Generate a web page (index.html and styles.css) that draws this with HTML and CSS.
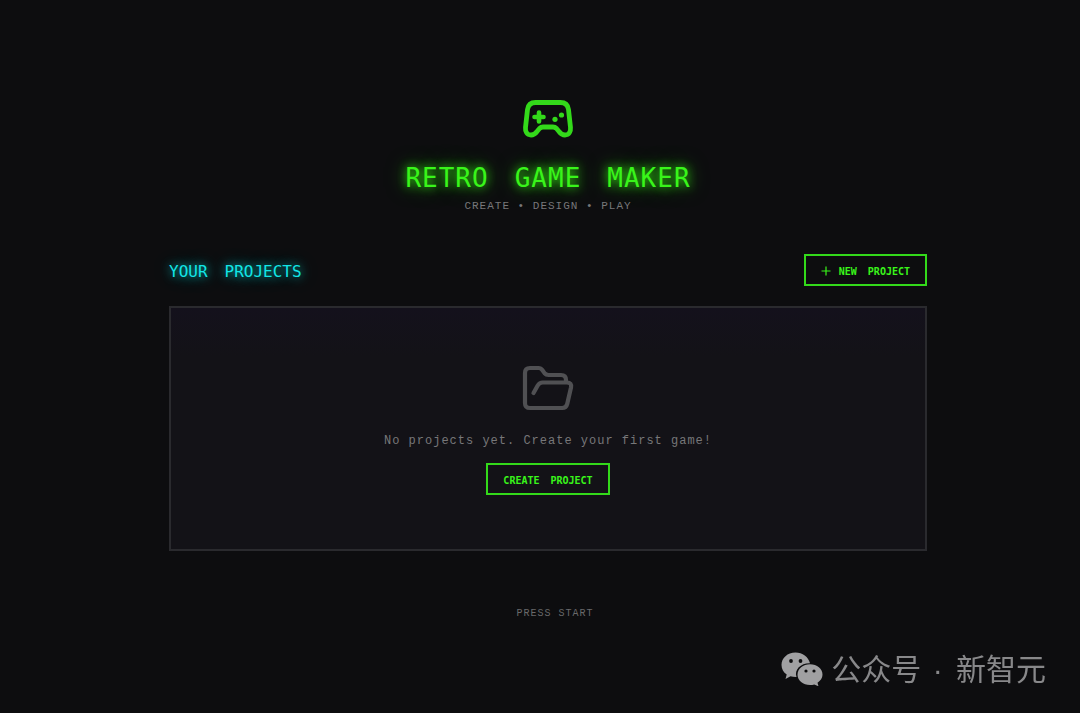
FILE: index.html
```
<!DOCTYPE html>
<html lang="en">
<head>
    <meta charset="UTF-8">
    <meta name="viewport" content="width=device-width, initial-scale=1.0">
    <title>Retro Game Maker</title>
    <link rel="stylesheet" href="styles.css">
</head>
<body>

<div class="container">
    <header class="hero">
        <svg class="hero-icon" viewBox="0 0 52 40" aria-hidden="true">
            <path d="M13.500 3.500h25q7 0 8 7l2 18c.4 4-1.500 7.500-5.500 7.500-3 0-4.500-1.500-6-3.500l-2.500-3q-1.500-1.500-3.500-1.500H21q-2 0-3.500 1.500L15 32.500c-1.500 2-3 3.500-6 3.500-4 0-5.900-3.500-5.500-7.500l2-18q1-7 8-7z" fill="none" stroke="currentColor" stroke-width="4.800" stroke-linejoin="round"/>
            <path d="M17 13.500v9M12.500 18h9" stroke="currentColor" stroke-width="4.600" stroke-linecap="round"/>
            <circle cx="33" cy="20.300" r="2.600" fill="currentColor"/>
            <circle cx="39.500" cy="16" r="2.600" fill="currentColor"/>
        </svg>
        <h1 class="words"><span>RETRO</span> <span>GAME</span> <span>MAKER</span></h1>
        <p class="tagline">CREATE • DESIGN • PLAY</p>
    </header>

    <main>
        <div class="section-header">
            <h2 class="words"><span>YOUR</span> <span>PROJECTS</span></h2>
            <button type="button" class="btn">
                <svg class="plus" viewBox="0 0 10 10" aria-hidden="true">
                    <path d="M5 .5v9M.5 5h9" stroke="currentColor" stroke-width="1.200"/>
                </svg>
                <span class="words"><span>NEW</span> <span>PROJECT</span></span>
            </button>
        </div>

        <section class="empty">
            <svg class="folder" viewBox="0 0 52 46" aria-hidden="true">
                <path d="M11.500 28l4.200-7.500q1.800-3 5-3H45q5 0 4 5l-3.800 16.500q-1 4-5 4H8q-5 0-5-5V8q0-5 5-5h8.500q2.500 0 3.800 2l2.400 3.400Q24 10 26.500 10H39q5 0 5 5v2.500" fill="none" stroke="currentColor" stroke-width="4.200" stroke-linecap="round" stroke-linejoin="round"/>
            </svg>
            <p>No projects yet. Create your first game!</p>
            <button type="button" class="btn"><span class="words"><span>CREATE</span> <span>PROJECT</span></span></button>
        </section>
    </main>

    <footer>PRESS START</footer>
</div>

<div class="watermark" lang="zh-CN">
    <svg viewBox="0 0 42 34" aria-hidden="true">
        <path d="M14.500.5C6.500.5.5 6 .5 13c0 4 2 7.300 5.200 9.600L4.500 27l5-2.700c2 .6 3.700.9 6 .8C13 17.500 20 11 29 11.300 27.500 5 21.500.5 14.500.5z" fill="currentColor"/>
        <path d="M29 12.300c-7 0-12.500 4.700-12.500 10.400S22 33 29 33c1.500 0 3-.2 4.300-.6l4.200 1.900-1-3.600c3-2 5-4.800 5-8 0-5.700-5.500-10.400-12.500-10.400z" fill="currentColor"/>
        <g fill="#0d0d0f">
            <circle cx="10" cy="9" r="1.900"/>
            <circle cx="19.500" cy="9" r="1.900"/>
            <circle cx="25" cy="19" r="1.600"/>
            <circle cx="33" cy="19" r="1.600"/>
        </g>
    </svg>
    <span>公众号<span class="dot"> · </span>新智元</span>
</div>

</body>
</html>
```

FILE: styles.css
```
* {
    box-sizing: border-box;
}

body {
    margin: 0;
    padding: 99px 0 0 16px;
    min-height: 100vh;
    background-color: #0d0d0f;
    color: #777779;
    font-family: "Courier New", "Liberation Mono", monospace;
}

h1, h2, p {
    margin: 0;
}

.container {
    max-width: 758px;
    margin: 0 auto;
}

.hero {
    display: flex;
    flex-direction: column;
    align-items: center;
}

.hero-icon {
    width: 52px;
    height: 40px;
    color: #33d91a;
}

.words {
    display: inline-flex;
    font-family: "DejaVu Sans Mono", monospace;
}

h1 {
    margin-top: 23px;
    gap: 26px;
    font-size: 26px;
    line-height: 32px;
    font-weight: normal;
    letter-spacing: 1px;
    color: #39f51a;
    text-shadow: 0 0 10px rgba(57, 255, 20, 0.9), 0 0 20px rgba(57, 255, 20, 0.6);
}

.tagline {
    margin-top: 4px;
    font-size: 11px;
    line-height: 16px;
    letter-spacing: 1px;
}

.section-header {
    display: flex;
    justify-content: space-between;
    align-items: center;
    margin: 40px 0 20px;
}

h2 {
    gap: 17px;
    padding-top: 4px;
    font-size: 16px;
    line-height: 24px;
    font-weight: normal;
    color: #12e6e6;
    text-shadow: 0 0 10px rgba(0, 255, 255, 0.7), 0 0 20px rgba(0, 255, 255, 0.4);
}

.btn {
    display: inline-flex;
    align-items: center;
    gap: 8px;
    height: 32px;
    padding: 2px 15px 0;
    border: 2px solid #33d91a;
    background: transparent;
    color: #39f51a;
    font-size: 10px;
    font-weight: bold;
    cursor: pointer;
}

.btn:hover {
    background-color: rgba(57, 255, 20, 0.1);
}

.btn .words {
    gap: 11px;
}

.plus {
    width: 10px;
    height: 10px;
}

.empty {
    display: flex;
    flex-direction: column;
    align-items: center;
    padding: 57px 20px 54px;
    border: 2px solid #2a2a2e;
    background: linear-gradient(#14111c, #131217 20%);
}

.folder {
    width: 52px;
    height: 46px;
    color: #505053;
}

.empty p {
    margin: 20px 0 12px;
    font-size: 12px;
    line-height: 20px;
    letter-spacing: 1px;
}

footer {
    margin: 55px 0 40px 14px;
    font-size: 10px;
    line-height: 16px;
    letter-spacing: 1px;
    text-align: center;
    color: #69696b;
}

/* sits over the page, bottom right corner */
.watermark {
    position: fixed;
    right: 34px;
    bottom: 21px;
    display: flex;
    align-items: center;
    gap: 8px;
    color: #88888a;
    font-family: "Noto Sans CJK SC", sans-serif;
    font-size: 30px;
    line-height: 44px;
}

.watermark svg {
    width: 42px;
    height: 34px;
    color: #a0a0a2;
}

.dot {
    padding: 0 5px 0 3px;
    font-family: "Liberation Sans", sans-serif;
}
```
